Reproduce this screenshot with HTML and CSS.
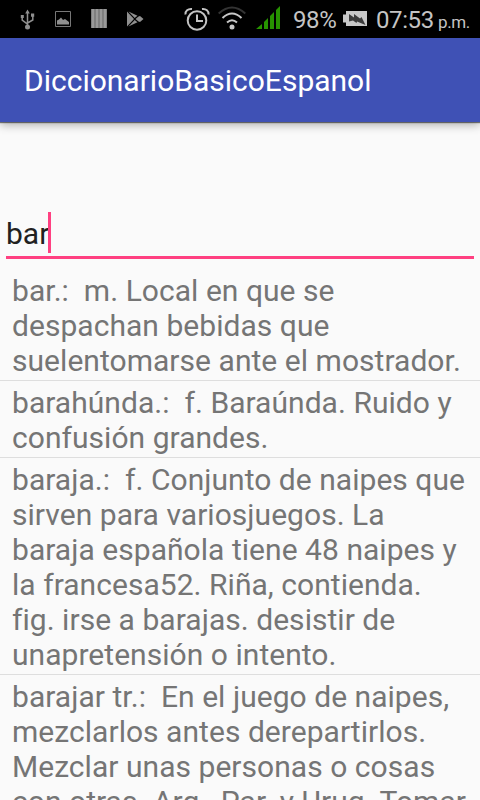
FILE: index.html
```html
<!DOCTYPE html>
<html lang="es">
<head>
  <meta charset="UTF-8" />
  <title>DiccionarioBasicoEspanol</title>
  <link rel="stylesheet" href="styles.css">
</head>
<body>

  <div class="status-bar">
    <div class="notifications">
      <svg class="icon-usb" width="16" height="22" viewBox="0 0 16 22" fill="none" stroke="#8f8f8f" stroke-width="1.5">
        <path d="M7.5 3v15M2.2 8v3.2l5.3 4M12.8 7v4l-5.3 3" />
        <path d="M7.5 .5l2.3 4H5.2zM.8 6h3v3h-3zM11 4.500h3.200v3.200h-3.200z" fill="#8f8f8f" stroke="none" />
        <circle cx="7.500" cy="18" r="2.500" fill="#8f8f8f" stroke="none" />
      </svg>
      <svg class="icon-image" width="16" height="16" viewBox="0 0 16 16">
        <path d="M.5.500h15v15H.5z" fill="none" stroke="#777" />
        <path d="M2 13.500v-4l2-1 2-2 2 2.500 2-1 4 3v2.500z" fill="#8f8f8f" />
      </svg>
      <svg class="icon-bars" width="16" height="19" viewBox="0 0 16 19">
        <path d="M0 0h16v19H0z" fill="#666" />
        <path d="M.500 0h3v19h-3zM4.500 0h3v19h-3zM8.500 0h3v19h-3zM12.500 0h3v19h-3z" fill="#999" />
      </svg>
      <svg class="icon-play" width="17" height="17" viewBox="0 0 17 17">
        <path d="M0 .5v15l7-7.500zM1.500.5l6.200 6.500 2.800-2.200zM1.500 15.500l6.200-6.500 2.800 2.200zM8.500 8l3-2.500 1.500-.5 3.500 3-3.500 3-1.500-.5z" fill="#8f8f8f" />
      </svg>
    </div>
    <div class="system">
      <svg class="icon-alarm" width="26" height="24" viewBox="0 0 26 24" fill="none" stroke="#c4c4c4" stroke-width="2">
        <circle cx="13" cy="13.500" r="9.300" />
        <path d="M13 7.500v6.500h6M1.500 7.500C1 4 4 1.500 8 2M24.500 7.500C25 4 22 1.500 18 2" />
      </svg>
      <svg class="icon-wifi" width="28" height="24" viewBox="0 0 28 24" fill="none" stroke="#c8c8c8" stroke-width="2">
        <path d="M.7 7.500Q14-4.500 27.300 7.500" stroke="#333" />
        <path d="M4.500 12Q14 3 23.500 12M9 16.500q5-4.500 10 0" />
        <circle cx="14" cy="21" r="2.500" fill="#c8c8c8" stroke="none" />
      </svg>
      <svg class="icon-signal" width="24" height="24" viewBox="0 0 24 24" fill="#279300">
        <path d="M0 23L6 18v5zM8 16l4-4v11H8zM14 10l4-4v17h-4zM20 4l4-4v23h-4z" />
      </svg>
      <span class="battery-level">98%</span>
      <svg class="icon-battery" width="24" height="16" viewBox="0 0 24 16">
        <path d="M3 0h21v15H3v-3.500H0v-8h3z" fill="#c8c8c8" />
        <path d="M6 3l5 3.500V3l6 4.500 1.500-1.500 4 8-8.500-3.500-.5 1.500-3.500-2.500-4 1z" fill="#3c3c3c" />
      </svg>
      <span class="clock">07:53</span>
      <span class="period">p.m.</span>
    </div>
  </div>

  <div class="app-bar">
    <h1>DiccionarioBasicoEspanol</h1>
  </div>

  <div class="search">
    <span class="query">bar</span><span class="cursor"></span>
  </div>

  <ul class="results">
    <li>bar.:&nbsp; m. Local en que se<br>despachan bebidas que<br>suelentomarse ante el mostrador.</li>
    <li>barahúnda.:&nbsp; f. Baraúnda. Ruido y<br>confusión grandes.</li>
    <li>baraja.:&nbsp; f. Conjunto de naipes que<br>sirven para variosjuegos. La<br>baraja española tiene 48 naipes y<br>la francesa52. Riña, contienda.<br>fig. irse a barajas. desistir de<br>unapretensión o intento.</li>
    <li>barajar tr.:&nbsp; En el juego de naipes,<br>mezclarlos antes derepartirlos.<br>Mezclar unas personas o cosas<br>con otras. Arg., Par. y Urug. Tomar</li>
  </ul>

</body>
</html>
```
FILE: styles.css
```css
body {
  margin: 0;
  height: 800px;
  overflow: hidden;
  background: #fafafa;
  font-family: Roboto, sans-serif;
  display: flex;
  flex-direction: column;
}
.status-bar {
  height: 38px;
  flex: none;
  background: #000;
  color: #c4c4c4;
  display: flex;
  justify-content: space-between;
}
.notifications, .system {
  display: flex;
  align-items: flex-start;
}
.notifications { padding-left: 20px; }
.icon-usb { margin-top: 9px; }
.icon-image { margin: 11px 0 0 19px; }
.icon-bars { margin: 9px 0 0 20px; }
.icon-play { margin: 11px 0 0 20px; }
.system {
  padding-right: 9px;
  line-height: 40px;
  white-space: nowrap;
}
.icon-alarm { margin-top: 7px; }
.icon-wifi { margin: 6px 0 0 8px; }
.icon-signal { margin: 6px 0 0 10px; }
.battery-level {
  width: 44px;
  margin-left: 13px;
  font-size: 24px;
  letter-spacing: -0.4px;
}
.icon-battery { margin: 11px 0 0 6px; }
.clock {
  width: 58px;
  margin-left: 9px;
  font-size: 24px;
  letter-spacing: -0.4px;
}
.period {
  width: 33px;
  margin-left: 4px;
  font-size: 17px;
  letter-spacing: -0.4px;
  line-height: 44px;
}
.app-bar {
  height: 84px;
  flex: none;
  padding-left: 24px;
  background: #3f51b5;
  box-shadow: 0 1px 1px rgba(0,0,0,0.5), 0 3px 9px rgba(0,0,0,0.3);
}
h1 {
  margin: 0;
  color: #fff;
  font-size: 30px;
  font-weight: 400;
  line-height: 86px;
}
.search {
  height: 44px;
  flex: none;
  margin: 90px 6px 0;
  border-bottom: 3px solid #ff4081;
  display: flex;
  align-items: flex-start;
}
.query {
  width: 42px;
  color: #212121;
  font-size: 30px;
  line-height: 44px;
}
.cursor {
  width: 3px;
  height: 41px;
  background: #ff4081;
}
.results {
  margin: 10px 0 0;
  padding: 0;
  list-style: none;
}
.results li {
  padding: 4px 12px 2px;
  border-bottom: 1px solid #dedede;
  color: #757575;
  font-size: 30px;
  line-height: 35px;
  letter-spacing: 0.04px;
  white-space: nowrap;
}
```
